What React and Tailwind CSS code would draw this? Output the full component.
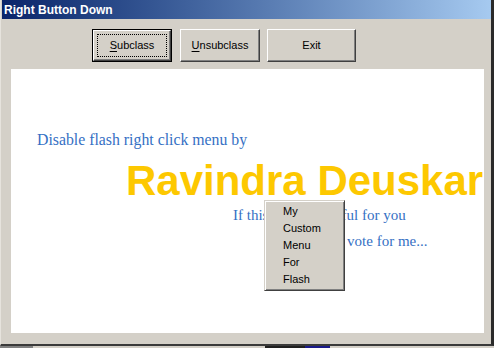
import React from 'react'

const ui = "font-['Liberation_Sans',Arial,sans-serif]"
const serif = "font-['Liberation_Serif','Times_New_Roman',serif]"

function WinButton({ label, accel, width, isDefault, className = '' }) {
  const face = (
    <div
      className={`relative flex h-full w-full items-center justify-center border border-t-white border-l-white border-r-[#404040] border-b-[#404040] bg-[#d4d0c8] text-[11px] text-black shadow-[inset_-1px_-1px_0_#808080] ${ui}`}
    >
      {isDefault && <span className="absolute inset-[3px] border border-dotted border-black" />}
      <span>
        {accel ? <span className="underline underline-offset-2">{label[0]}</span> : label[0]}
        {label.slice(1)}
      </span>
    </div>
  )
  return (
    <div className={`h-[33px] shrink-0 ${isDefault ? 'border border-black' : ''} ${className}`} style={{ width }}>
      {face}
    </div>
  )
}

function ContextMenu() {
  const items = ['My', 'Custom', 'Menu', 'For', 'Flash']
  return (
    <div className="absolute left-[253px] top-[131px] w-[81px] h-[91px] border border-t-[#d4d0c8] border-l-[#d4d0c8] border-r-[#404040] border-b-[#404040] bg-[#d4d0c8] shadow-[inset_1px_1px_0_#ffffff,inset_-1px_-1px_0_#808080] pt-[2px]">
      {items.map((it) => (
        <div key={it} className={`h-[17px] pl-[18px] text-[11px] leading-[17px] text-black ${ui}`}>
          {it}
        </div>
      ))}
    </div>
  )
}

export default function App() {
  return (
    <div className="w-[494px] h-[348px] overflow-hidden bg-[#d4d0c8] flex flex-col">
      <div className="flex flex-col h-[346px] border-l border-l-[#e6e3dd] border-r-[3px] border-r-[#2a2a2a] border-b-2 border-b-[#3a3a3a] pl-px">
        {/* title bar */}
        <div className="h-[19px] shrink-0 flex items-center bg-gradient-to-r from-[#0a246a] to-[#a6caf0] pl-[2px]">
          <span className={`text-[12px] font-bold text-white ${ui}`}>Right Button Down</span>
        </div>

        {/* buttons */}
        <div className="mt-[10px] flex pl-[90px]">
          <WinButton label="Subclass" accel width={80} isDefault />
          <WinButton label="Unsubclass" accel width={80} className="ml-[8px]" />
          <WinButton label="Exit" width={89} className="ml-[7px]" />
        </div>

        {/* flash stage */}
        <div className="mt-[7px] ml-[9px] w-[473px] h-[264px] bg-white relative flex flex-col">
          <div className={`mt-[62px] ml-[26px] text-[15.8px] leading-[17px] text-[#3570c4] whitespace-nowrap ${serif}`}>
            Disable flash right click menu by
          </div>
          <div className={`mt-[12px] ml-[115px] text-[42px] leading-[42px] font-bold text-[#fdc800] whitespace-nowrap ${ui}`}>
            Ravindra Deuskar
          </div>
          <div className={`mt-[5px] ml-[222px] text-[15px] leading-[17px] text-[#3570c4] whitespace-nowrap ${serif}`}>
            If thi<span className="tracking-[-0.4px]">s movie is use</span>ful for you
          </div>
          <div className={`mt-[9px] ml-[294px] text-[15px] leading-[17px] text-[#3570c4] whitespace-nowrap ${serif}`}>
            Please vote for me...
          </div>
          <ContextMenu />
        </div>
      </div>
      {/* taskbar sliver */}
      <div className="h-[2px] flex">
        <div className="w-[33px] bg-[#808080]" />
        <div className="w-[232px] bg-[#d4d0c8]" />
        <div className="w-[40px] bg-[#202020]" />
        <div className="w-[25px] bg-[#1a1a8a]" />
        <div className="flex-1 bg-[#d4d0c8]" />
      </div>
    </div>
  )
}
